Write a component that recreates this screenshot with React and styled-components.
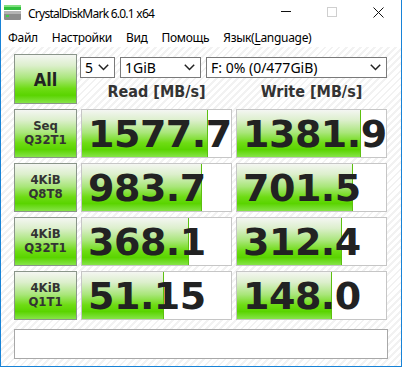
import React from 'react';
import styled, { createGlobalStyle } from 'styled-components';

const GlobalStyle = createGlobalStyle`
  html, body {
    margin: 0;
    padding: 0;
    background: #fff;
  }
  body {
    font-family: 'Noto Sans', 'Open Sans', sans-serif;
    color: #222;
  }
`;

const results = [
  { top: 'Seq', bottom: 'Q32T1', read: '1577.7', write: '1381.9' },
  { top: '4KiB', bottom: 'Q8T8', read: '983.7', write: '701.5' },
  { top: '4KiB', bottom: 'Q32T1', read: '368.1', write: '312.4' },
  { top: '4KiB', bottom: 'Q1T1', read: '51.15', write: '148.0' },
];

// CrystalDiskMark meter is logarithmic
const meter = (v) => {
  const r = Math.log10(parseFloat(v) * 10) / 5;
  return Math.max(0, Math.min(1, r)) * 100;
};

const greenGrad = `linear-gradient(
  to bottom,
  #f4f6f2 0%,
  #dcefcc 22%,
  #a9e67a 48%,
  #6edc14 70%,
  #5ad400 84%,
  #86e448 100%
)`;

const boldFace = `'DejaVu Sans Condensed', 'DejaVu Sans', Verdana, sans-serif`;

function DiskIcon() {
  return (
    <svg width='18' height='16' viewBox='0 0 18 16'>
      <rect x='0' y='0' width='17' height='5' fill='#2fbf3c' />
      <rect x='0' y='0' width='17' height='2' fill='#7fe07f' />
      <rect x='0' y='6' width='17' height='9' rx='1' fill='#8c8c8c' />
      <rect x='0' y='6' width='17' height='3' fill='#b4b4b4' />
      <rect x='2' y='10' width='3' height='2' fill='#3fd04a' />
    </svg>
  );
}

function Chevron() {
  return (
    <svg width='11' height='7' viewBox='0 0 11 7'>
      <path d='M0.8 0.8 L5.5 5.5 L10.2 0.8' fill='none' stroke='#222' strokeWidth='1.5' />
    </svg>
  );
}

function App() {
  return (
    <>
      <GlobalStyle />
      <Window>
        <TitleBar>
          <TitleIcon>
            <DiskIcon />
          </TitleIcon>
          <TitleText>CrystalDiskMark 6.0.1 x64</TitleText>
          <Controls>
            <CtrlButton>
              <svg width='10' height='10' viewBox='0 0 10 10'>
                <path d='M0 4.5 H10' stroke='#111' strokeWidth='1' />
              </svg>
            </CtrlButton>
            <CtrlButton>
              <svg width='10' height='10' viewBox='0 0 10 10'>
                <rect x='0.5' y='0.5' width='9' height='9' fill='none' stroke='#cfcfcf' strokeWidth='1' />
              </svg>
            </CtrlButton>
            <CtrlButton>
              <svg width='11' height='11' viewBox='0 0 11 11'>
                <path d='M0.5 0.5 L10.5 10.5 M10.5 0.5 L0.5 10.5' stroke='#111' strokeWidth='1' />
              </svg>
            </CtrlButton>
          </Controls>
        </TitleBar>

        <MenuBar>
          <MenuItem>Файл</MenuItem>
          <MenuItem>Настройки</MenuItem>
          <MenuItem>Вид</MenuItem>
          <MenuItem>Помощь</MenuItem>
          <MenuItem>
            Язык(<u>L</u>anguage)
          </MenuItem>
        </MenuBar>

        <Content>
          <TopSection>
            <AllButton>All</AllButton>
            <TopRight>
              <SelectRow>
                <Select $w={35}>
                  <span>5</span>
                  <Chevron />
                </Select>
                <Select $w={81}>
                  <span>1GiB</span>
                  <Chevron />
                </Select>
                <Select $w={181}>
                  <span>F: 0% (0/477GiB)</span>
                  <Chevron />
                </Select>
              </SelectRow>
              <HeaderRow>
                <Header>Read [MB/s]</Header>
                <Header>Write [MB/s]</Header>
              </HeaderRow>
            </TopRight>
          </TopSection>

          <Rows>
            {results.map((r, i) => (
              <Row key={i}>
                <TestLabel>
                  <span>{r.top}</span>
                  <span>{r.bottom}</span>
                </TestLabel>
                <ValueBox>
                  <Fill style={{ width: meter(r.read) + '%' }} />
                  <Value>{r.read}</Value>
                </ValueBox>
                <ValueBox>
                  <Fill style={{ width: meter(r.write) + '%' }} />
                  <Value>{r.write}</Value>
                </ValueBox>
              </Row>
            ))}
          </Rows>

          <StatusBox />
        </Content>
      </Window>
    </>
  );
}

const Window = styled.div`
  width: 402px;
  height: 367px;
  box-sizing: border-box;
  border: 1px solid #1883d7;
  border-top: none;
  display: flex;
  flex-direction: column;
  background: #fff;
  overflow: hidden;
`;

const TitleBar = styled.div`
  height: 28px;
  display: flex;
  align-items: center;
  flex-shrink: 0;
`;

const TitleIcon = styled.div`
  width: 18px;
  height: 16px;
  margin: -2px 6px 0 3px;
  display: flex;
`;

const TitleText = styled.div`
  font-size: 12px;
  letter-spacing: -0.75px;
  color: #000;
  flex: 1;
  margin-top: -2px;
`;

const Controls = styled.div`
  display: flex;
  height: 100%;
`;

const CtrlButton = styled.div`
  width: 46px;
  height: 100%;
  display: flex;
  align-items: center;
  justify-content: center;
  margin-top: -2px;
`;

const MenuBar = styled.div`
  height: 19px;
  display: flex;
  align-items: center;
  flex-shrink: 0;
`;

const MenuItem = styled.div`
  font-size: 12px;
  letter-spacing: -0.3px;
  color: #000;
  padding: 0 7px;

  u {
    text-underline-offset: 2px;
  }
`;

const Content = styled.div`
  flex: 1;
  padding: 7px 13px 0 13px;
  background-color: #fdfdfd;
  background-image: repeating-linear-gradient(
    -45deg,
    #ffffff 0px,
    #ffffff 3px,
    #f2f2f2 3px,
    #f2f2f2 5px
  );
`;

const TopSection = styled.div`
  display: flex;
  gap: 3px;
`;

const AllButton = styled.div`
  width: 63px;
  height: 50px;
  box-sizing: border-box;
  border: 1px solid #8a958a;
  background: ${greenGrad};
  display: flex;
  align-items: center;
  justify-content: center;
  font-family: ${boldFace};
  font-weight: bold;
  font-size: 18px;
  color: #222;
`;

const TopRight = styled.div`
  display: flex;
  flex-direction: column;
`;

const SelectRow = styled.div`
  display: flex;
  gap: 5px;
  margin-top: 3px;
`;

const Select = styled.div`
  width: ${(p) => p.$w}px;
  height: 21px;
  box-sizing: border-box;
  border: 1px solid #7a7a7a;
  background: #fff;
  display: flex;
  align-items: center;
  justify-content: space-between;
  padding: 0 5px 0 4px;
  font-size: 14px;
  color: #000;

  span {
    margin-top: -1px;
  }
`;

const HeaderRow = styled.div`
  display: grid;
  grid-template-columns: 151px 151px;
  gap: 4px;
  margin-left: 1px;
  height: 27px;
  align-items: center;
`;

const Header = styled.div`
  text-align: center;
  font-family: ${boldFace};
  font-weight: bold;
  font-size: 16px;
  color: #333;
`;

const Rows = styled.div`
  display: flex;
  flex-direction: column;
  gap: 5px;
  margin-top: 4px;
`;

const Row = styled.div`
  display: grid;
  grid-template-columns: 63px 151px 151px;
  gap: 4px;
  height: 49px;
`;

const TestLabel = styled.div`
  box-sizing: border-box;
  border: 1px solid #8a958a;
  background: ${greenGrad};
  display: flex;
  flex-direction: column;
  align-items: center;
  justify-content: center;
  font-family: ${boldFace};
  font-weight: bold;
  font-size: 13px;
  line-height: 14px;
  color: #333;
  padding-bottom: 2px;
`;

const ValueBox = styled.div`
  position: relative;
  box-sizing: border-box;
  border: 1px solid #c6c6c6;
  background: #fff;
  display: flex;
  align-items: center;
  overflow: hidden;
`;

const Fill = styled.div`
  position: absolute;
  left: 0;
  top: 0;
  bottom: 0;
  background: ${greenGrad};
  border-right: 1px solid #5cc010;
`;

const Value = styled.div`
  position: relative;
  padding-left: 6px;
  font-family: 'DejaVu Sans', Verdana, sans-serif;
  font-weight: bold;
  font-size: 38px;
  letter-spacing: -0.5px;
  color: #222;
  line-height: 1;
  margin-top: 1px;
`;

const StatusBox = styled.div`
  margin-top: 9px;
  height: 30px;
  box-sizing: border-box;
  border: 1px solid #a8a8a8;
  background: #fff;
`;

export default App;
